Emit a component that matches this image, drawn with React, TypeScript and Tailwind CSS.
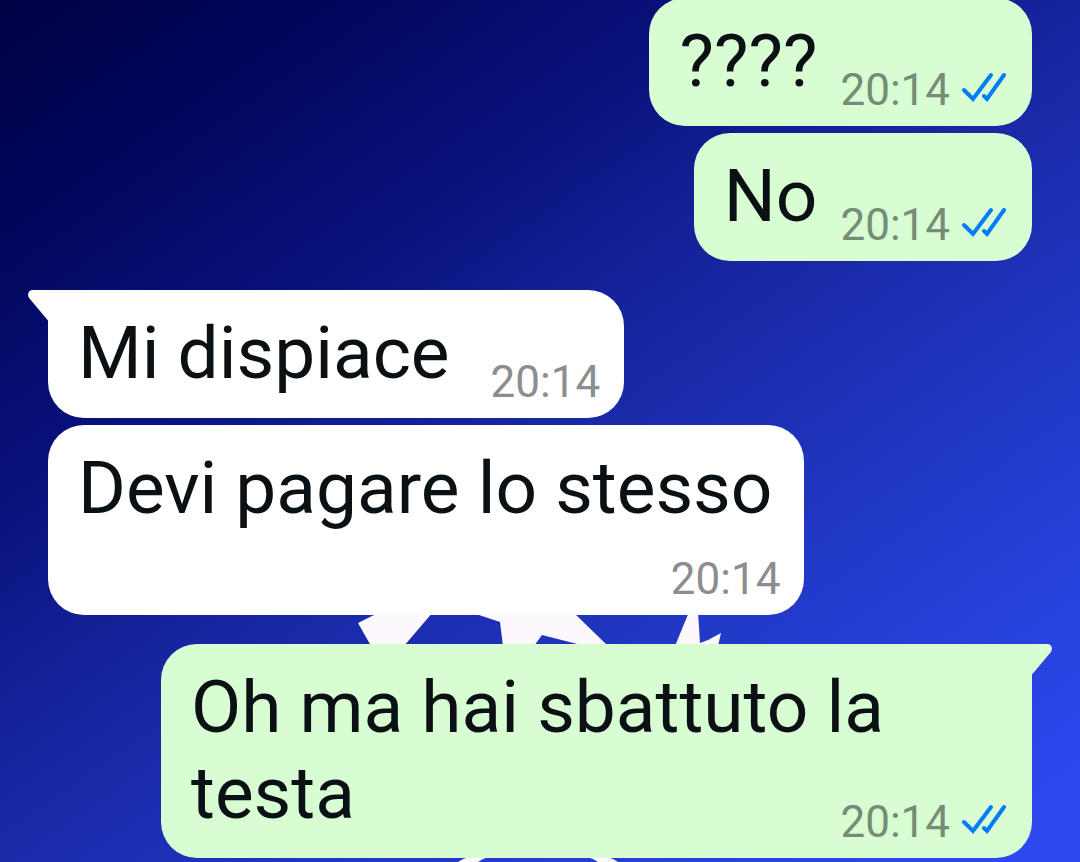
import React from 'react';
import clsx from 'clsx';

interface Message {
  id: number;
  text: string;
  time: string;
  sent: boolean;
  tail?: boolean;
  // long single lines push the time onto a row of its own
  timeBelow?: boolean;
}

const MESSAGES: Message[] = [
  { id: 1, text: '????', time: '20:14', sent: true },
  { id: 2, text: 'No', time: '20:14', sent: true },
  { id: 3, text: 'Mi dispiace', time: '20:14', sent: false, tail: true },
  { id: 4, text: 'Devi pagare lo stesso', time: '20:14', sent: false, timeBelow: true },
  { id: 5, text: 'Oh ma hai sbattuto la testa', time: '20:14', sent: true, tail: true },
];

function ReadTicks() {
  return (
    <svg
      viewBox="0 0 46 32"
      className="mb-1 h-8 w-[46px]"
      fill="none"
      stroke="#027cf8"
      strokeWidth="4"
      strokeLinecap="round"
      role="img"
      aria-label="Letto"
    >
      <path d="M4 18 L13 27 L31 3" />
      <path d="M24 24 L27 27 L44 3" />
    </svg>
  );
}

function Tail({ sent }: { sent: boolean }) {
  return (
    <svg
      viewBox="0 0 20 32"
      className={clsx(
        'absolute top-0 h-8 w-5',
        sent ? '-right-5 -scale-x-100 text-[#d8fdd2]' : '-left-5 text-white'
      )}
      fill="currentColor"
      aria-hidden="true"
    >
      <path d="M20 0 H5 C0.5 0 -1.5 4.5 1.5 8.5 L20 30.5 Z" />
    </svg>
  );
}

function Bubble({ message }: { message: Message }) {
  const { text, time, sent, tail, timeBelow } = message;
  return (
    <div
      className={clsx(
        'relative max-w-[871px] rounded-[36px] pt-5 pb-[22px] pl-[30px]',
        sent ? 'self-end bg-[#d8fdd2] pr-[26px]' : 'self-start bg-white pr-6',
        tail && (sent ? 'rounded-tr-none' : 'rounded-tl-none')
      )}
    >
      {tail && <Tail sent={sent} />}
      <div className="flow-root text-[73px] leading-[86px] text-[#0a1014]">
        <span className={clsx(timeBelow && 'block pr-2')}>{text}</span>
        <span
          className={clsx(
            'float-right -mb-3 flex items-center text-[44px] leading-[52px]',
            timeBelow ? 'mt-[22px]' : 'mt-[46px]',
            sent ? 'ml-[23px] gap-[10px] text-[#758c78]' : 'ml-[41px] text-[#8b8d8f]'
          )}
        >
          <time>{time}</time>
          {sent && <ReadTicks />}
        </span>
      </div>
    </div>
  );
}

function Wallpaper() {
  return (
    <svg
      viewBox="350 600 380 262"
      className="absolute bottom-0 left-[350px] h-[262px] w-[380px]"
      fill="#fdf8fd"
      aria-hidden="true"
    >
      <path d="M380 612 L358 623 L371 646 H404 L433 612 Z" />
      <path d="M470 612 L500 622 L503 646 H534 L542 635 L585 646 H608 L573 612 Z" />
      <path d="M689 612 L675 646 H718 L721 633 L708 640 L700 643 L698 612 Z" />
      <path d="M458 862 Q464 858 472 856 H492 Q484 858 478 862 Z" />
      <path d="M618 862 Q612 858 604 856 H584 Q592 858 598 862 Z" />
    </svg>
  );
}

export default function App() {
  return (
    <main className="relative flex h-screen flex-col justify-end overflow-hidden bg-[linear-gradient(145deg,#010245_0%,#02065c_15%,#071078_29%,#1725a0_48%,#2038c4_68%,#2c48ee_94%)] px-12 pb-1 font-[Roboto,sans-serif]">
      <Wallpaper />
      {MESSAGES.map((message, i) => {
        const previous = MESSAGES[i - 1];
        const sameSender = previous?.sent === message.sent;
        return (
          <div
            key={message.id}
            className={clsx('relative flex flex-col', previous && (sameSender ? 'mt-[7px]' : 'mt-[29px]'))}
          >
            <Bubble message={message} />
          </div>
        );
      })}
    </main>
  );
}
